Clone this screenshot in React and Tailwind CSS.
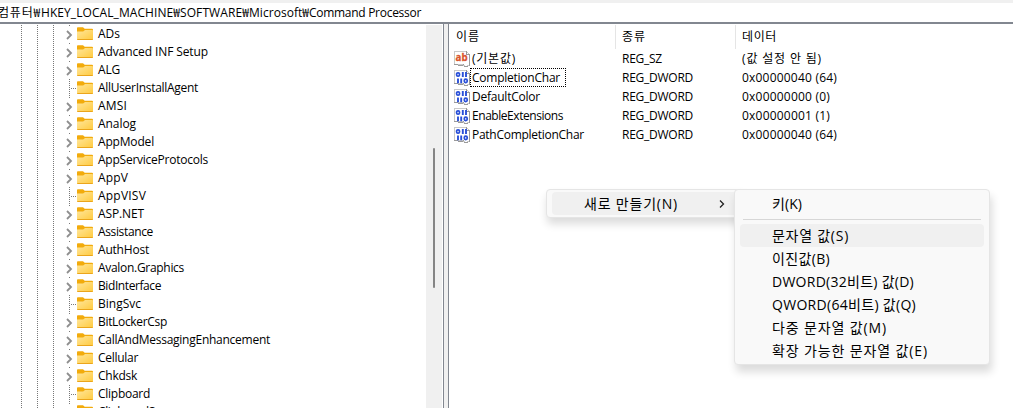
import React, { useLayoutEffect, useRef, useState } from 'react';

const PATH = [
  ['컴퓨터₩', 43],
  ['HKEY_LOCAL_MACHINE₩', 139],
  ['SOFTWARE₩', 69],
  ['Microsoft₩', 60],
  ['Command Processor', 112],
];

const TREE = [
  ['ADs', 22, true],
  ['Advanced INF Setup', 110, true],
  ['ALG', 22, true],
  ['AllUserInstallAgent', 100, false],
  ['AMSI', 29, true],
  ['Analog', 38, true],
  ['AppModel', 56, true],
  ['AppServiceProtocols', 110, true],
  ['AppV', 30, true],
  ['AppVISV', 48, false],
  ['ASP.NET', 46, true],
  ['Assistance', 55, true],
  ['AuthHost', 51, true],
  ['Avalon.Graphics', 86, true],
  ['BidInterface', 63, true],
  ['BingSvc', 43, false],
  ['BitLockerCsp', 69, true],
  ['CallAndMessagingEnhancement', 172, true],
  ['Cellular', 40, true],
  ['Chkdsk', 39, true],
  ['Clipboard', 52, false],
  ['ClipboardServer', 84, true],
];

const VALUES = [
  { name: '(기본값)', w: 44, type: 'REG_SZ', typeW: 40, data: '(값 설정 안 됨)', dataW: 80, string: true },
  { name: 'CompletionChar', w: 88, type: 'REG_DWORD', typeW: 71, data: '0x00000040 (64)', dataW: 95, focused: true },
  { name: 'DefaultColor', w: 68, type: 'REG_DWORD', typeW: 71, data: '0x00000000 (0)', dataW: 88 },
  { name: 'EnableExtensions', w: 91, type: 'REG_DWORD', typeW: 71, data: '0x00000001 (1)', dataW: 88 },
  { name: 'PathCompletionChar', w: 112, type: 'REG_DWORD', typeW: 71, data: '0x00000040 (64)', dataW: 95 },
];

const NEW_ITEMS = [
  ['문자열 값(S)', 77, true],
  ['이진값(B)', 58],
  ['DWORD(32비트) 값(D)', 142],
  ['QWORD(64비트) 값(Q)', 144],
  ['다중 문자열 값(M)', 115],
  ['확장 가능한 문자열 값(E)', 156],
];

// Spreads a label's letters so that it takes the given width
const Label = ({ text, width, className = '' }) => {
  const ref = useRef(null);
  const [spacing, setSpacing] = useState(0);

  useLayoutEffect(() => {
    const natural = ref.current.getBoundingClientRect().width;
    setSpacing((width - natural) / text.length);
  }, [text, width]);

  return (
    <span ref={ref} className={`inline-block whitespace-pre ${className}`} style={{ letterSpacing: `${spacing}px` }}>
      {text}
    </span>
  );
};

const FolderIcon = () => (
  <svg width="16" height="14" viewBox="0 0 16 14" className="shrink-0">
    <defs>
      <linearGradient id="folder" x1="0" y1="0" x2="1" y2="1">
        <stop offset="0" stopColor="#ffe69b" />
        <stop offset="1" stopColor="#ffca3e" />
      </linearGradient>
    </defs>
    <path d="M0 1.2Q0 .3.8.3H6l1.7 1.5H15q1 0 1 1V6H0z" fill="#f2ab0c" />
    <path d="M0 4.5H6.2L8 3H15.2q.8 0 .8.8V12.2q0 .8-.8.8H.8q-.8 0-.8-.8z" fill="url(#folder)" />
    <path d="M.3 12.5H15.7" stroke="#eba51b" />
  </svg>
);

const ValueIcon = ({ string }) => (
  <svg width="16" height="16" viewBox="0 0 16 16" className="shrink-0">
    <g shapeRendering="crispEdges">
      <path d="M.5 .5H12.5L15.5 3.5V14.5H13.5V15.5H10.5V14.5H9.5V13.5H.5z" fill="#fff" stroke="#c9c9c9" />
      <path d="M0 13.5H4M4 14.5H9M9 13.5H10M10 15.5H14M15.5 4V15M12.5 0V3.5H16" fill="none" stroke="#9a9a9a" />
    </g>
    {string ? (
      <text x="1.6" y="10" fontSize="10.5" fontWeight="700" fill="#d9532c" stroke="#d9532c" strokeWidth=".3" fontFamily="Open Sans" textLength="12" lengthAdjust="spacingAndGlyphs">ab</text>
    ) : (
      <g fill="none" stroke="#2a50d8" strokeWidth="1.7">
        <rect x="2.6" y="2.8" width="2.9" height="3.4" rx="1.3" />
        <path d="M8.8 2V7M12 2V7M4 8.5V13.2M7.2 8.5V13.2" strokeWidth="1.9" />
        <rect x="10.3" y="9.2" width="2.9" height="3.4" rx="1.3" />
      </g>
    )}
  </svg>
);

const Guide = () => (
  <div className="h-full w-4 shrink-0">
    <div className="h-full w-px bg-[repeating-linear-gradient(#777_0_1px,transparent_1px_2px)]" />
  </div>
);

const TreeRow = ({ name, width, expandable }) => (
  <div className="flex h-[18px] shrink-0 items-center">
    <div className="flex h-full w-[77px] shrink-0 pl-[21px]">
      <Guide />
      <Guide />
      <Guide />
      {expandable ? (
        <div className="relative h-full w-2">
          <div className="h-px w-px bg-[#777]" />
          <svg width="7" height="10" viewBox="0 0 7 10" className="absolute -left-[3px] top-[5px]">
            <path d="M1 1L5 5L1 9" fill="none" stroke="#8e8e8e" strokeWidth="1.8" />
          </svg>
        </div>
      ) : (
        <div className="flex h-full w-2 items-center">
          <div className="h-full w-px bg-[repeating-linear-gradient(#777_0_1px,transparent_1px_2px)]" />
          <div className="ml-px mt-px h-px w-1.5 bg-[repeating-linear-gradient(90deg,#777_0_1px,transparent_1px_2px)]" />
        </div>
      )}
    </div>
    <FolderIcon />
    <Label text={name} width={width} className="ml-[5px] leading-[18px]" />
  </div>
);

const KeyTree = () => (
  <div className="flex w-[443px] shrink-0 pt-px">
    <div className="flex w-[426px] flex-col overflow-hidden">
      {TREE.map(([name, width, expandable]) => (
        <TreeRow key={name} name={name} width={width} expandable={expandable} />
      ))}
    </div>
    <div className="w-4 bg-[#f0f0f0] pl-[7px] pt-[123px]">
      <div className="h-[140px] w-0.5 rounded-full bg-[#858585]" />
    </div>
  </div>
);

const ValueList = () => (
  <div className="flex-1 pt-px">
    <div className="flex h-6 leading-6">
      <div className="w-[167px] border-r border-[#e5e5e5] pl-[7px]"><Label text="이름" width={24} /></div>
      <div className="w-[120px] border-r border-[#e5e5e5] pl-1.5"><Label text="종류" width={24} /></div>
      <div className="pl-1.5"><Label text="데이터" width={35} /></div>
    </div>
    {VALUES.map((v) => (
      <div key={v.name} className="flex h-[19px] items-center leading-[19px]">
        <div className="flex w-[173px] items-center pl-[5px]">
          <ValueIcon string={v.string} />
          <div className={v.focused ? 'flex h-[19px] w-24 items-center border border-dotted border-black pl-px' : 'pl-0.5'}>
            <Label text={v.name} width={v.w} />
          </div>
        </div>
        <div className="w-[120px]"><Label text={v.type} width={v.typeW} /></div>
        <Label text={v.data} width={v.dataW} />
      </div>
    ))}
  </div>
);

const ContextMenu = () => (
  <>
    <div className="absolute left-[546px] top-[189px] h-[29px] w-[200px] rounded border border-[#e5e5e5] bg-[#f9f9f9] px-[5px] pt-0.5 text-[14px] shadow-[1px_6px_8px_rgba(0,0,0,0.14)]">
      <div className="flex h-[23px] items-center rounded bg-[#f0f0f0] pl-8">
        <Label text="새로 만들기(N)" width={94} />
        <svg width="6" height="8" viewBox="0 0 6 8" className="ml-[41px]">
          <path d="M1 .5L4.5 4L1 7.5" fill="none" stroke="#222" strokeWidth="1.3" />
        </svg>
      </div>
    </div>
    <div className="absolute left-[734px] top-[189px] h-[176px] w-64 rounded border border-[#e5e5e5] bg-[#f9f9f9] px-[5px] pt-0.5 text-[14px] shadow-[2px_7px_9px_rgba(0,0,0,0.14)]">
      <div className="flex h-[23px] items-center pl-8"><Label text="키(K)" width={30} /></div>
      <div className="mx-[3px] mb-1 mt-1 h-px bg-[#d7d7d7]" />
      {NEW_ITEMS.map(([text, width, active]) => (
        <div key={text} className={`flex h-[23px] items-center rounded pl-8 ${active ? 'bg-[#f0f0f0]' : ''}`}>
          <Label text={text} width={width} />
        </div>
      ))}
    </div>
  </>
);

export default function App() {
  return (
    <div className="relative flex h-[408px] w-[1013px] flex-col overflow-hidden bg-white font-['Open_Sans','Noto_Sans_CJK_KR',sans-serif] text-[12px] text-black">
      <div className="h-[3px] shrink-0 bg-[#f0f0f0]" />
      <div className="-ml-0.5 flex h-[19px] shrink-0 items-center leading-[19px]">
        {PATH.map(([text, width]) => (
          <Label key={text} text={text} width={width} />
        ))}
      </div>
      <div className="h-0.5 shrink-0 bg-[#828790]" />
      <div className="flex min-h-0 flex-1">
        <KeyTree />
        <div className="w-1.5 shrink-0 border-x border-[#828790] bg-[#f0f0f0]" />
        <ValueList />
      </div>
      <ContextMenu />
    </div>
  );
}
